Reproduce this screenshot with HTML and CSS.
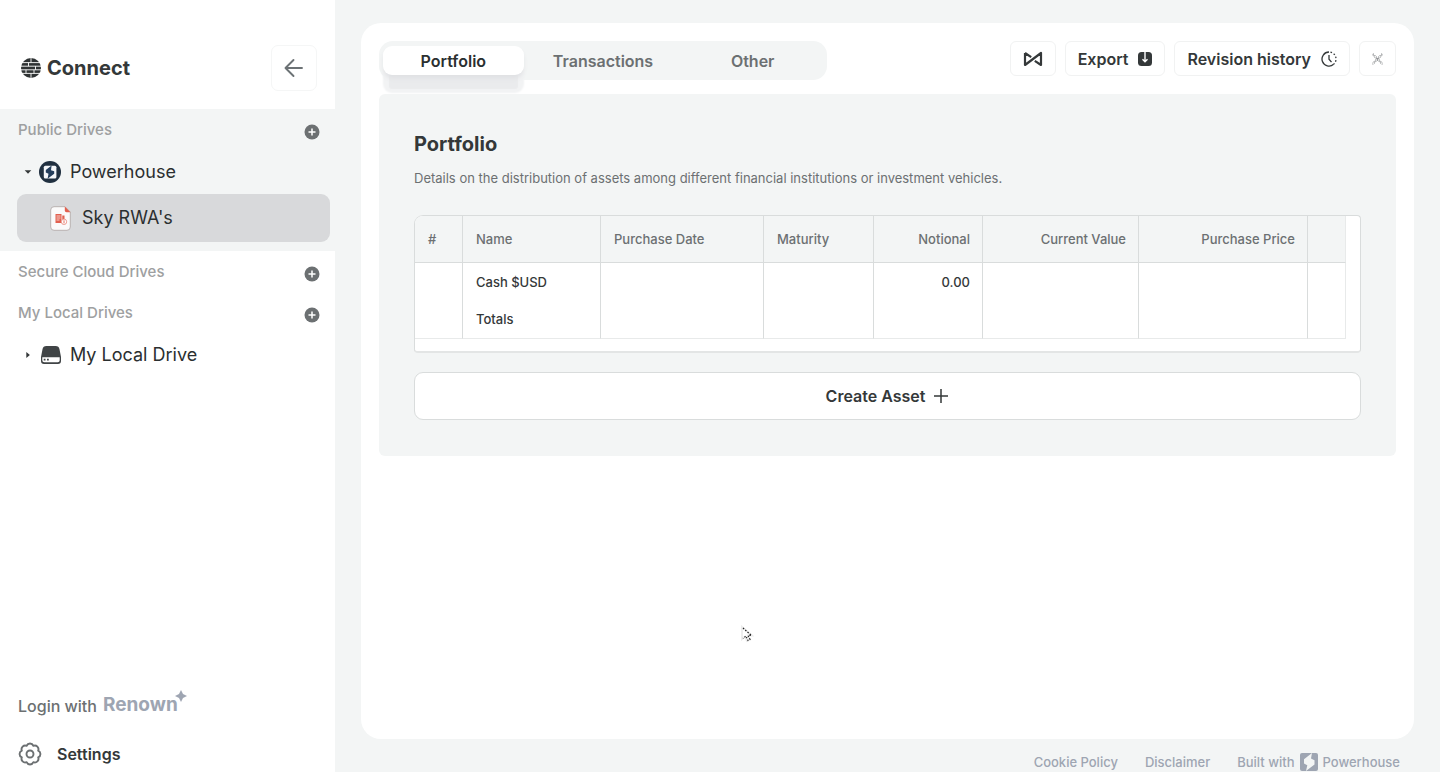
FILE: index.html
```html
<!DOCTYPE html>
<html lang="en">
<head>
<meta charset="utf-8">
<title>Connect</title>
<link rel="stylesheet" href="styles.css">
</head>
<body>
<div class="app">
  <aside class="sidebar">
    <header class="brand-bar">
      <div class="brand">
        <svg class="brand-mark" viewBox="0 0 20 20" aria-hidden="true">
          <circle cx="10" cy="10" r="10" fill="#2f3334"/>
          <path d="M1 4.600h18M0 8.200h20M0 11.800h20M1 15.400h18M10 0v4.600M7.500 4.600v3.600M14.500 8.200v3.600M5 11.800v3.600M13 11.800v3.600M10 15.400V20" stroke="#fff" stroke-width=".9" fill="none"/>
        </svg>
        <span class="brand-name">Connect</span>
      </div>
      <button class="collapse" type="button" aria-label="Collapse sidebar">
        <svg width="20" height="20" viewBox="0 0 20 20" fill="none" stroke="#6c7275" stroke-width="1.900" stroke-linecap="round" stroke-linejoin="round"><path d="M18 10H2M9.500 2 1.500 10l8 8"/></svg>
      </button>
    </header>
    <nav class="drives">
      <section class="group group-active">
        <div class="group-head">
          <h2 class="group-title">Public Drives</h2>
          <button class="add" type="button" aria-label="Add public drive"><svg width="16" height="16" viewBox="0 0 16 16"><circle cx="8" cy="8" r="7.500" fill="#6c7072"/><path d="M8 4.500v7M4.500 8h7" stroke="#fff" stroke-width="1.500"/></svg></button>
        </div>
        <a class="drive" href="#powerhouse">
          <svg class="caret" width="8" height="8" viewBox="0 0 8 8"><path d="M.7 2.200h6.600L4 5.800z" fill="#343839"/></svg>
          <svg class="drive-icon" width="22" height="22" viewBox="0 0 22 22"><circle cx="11" cy="11" r="11" fill="#203040"/><rect x="4.800" y="4.800" width="12.600" height="12.600" rx="1.500" fill="#f5f7fa"/><path d="M12.600 4.500 6.800 9v2.500l2.700 1.200L8.600 17.800l6.600-5V10.200l-3.200-1z" fill="#243e5c"/></svg>
          <span>Powerhouse</span>
        </a>
        <a class="drive file" href="#sky">
          <svg class="file-icon" width="21" height="25" viewBox="0 0 21 25"><path d="M4 .7h11l5.300 5.300v15a3.300 3.300 0 0 1-3.300 3.300H4A3.300 3.300 0 0 1 .7 21V4A3.300 3.300 0 0 1 4 .7z" fill="#fbfafa" stroke="#b9b2b1"/><path d="M14.800.5 20.500 6.200h-4a1.700 1.700 0 0 1-1.700-1.700z" fill="#e2604f"/><path d="M5.500 8h6v9h-6zM12.300 9.500h2.200V13h-2.200z" fill="#e2604f"/><path d="M6.500 10h4M6.500 12h4M6.500 14h3" stroke="#fff" stroke-width=".7"/><circle cx="14" cy="15.800" r="2.700" fill="#fff" stroke="#e88579" stroke-width=".8"/><path d="M14 14.300v3" stroke="#e2604f" stroke-width=".9"/></svg>
          <span>Sky RWA's</span>
        </a>
      </section>
      <section class="group">
        <div class="group-head">
          <h2 class="group-title">Secure Cloud Drives</h2>
          <button class="add" type="button" aria-label="Add cloud drive"><svg width="16" height="16" viewBox="0 0 16 16"><circle cx="8" cy="8" r="7.500" fill="#6c7072"/><path d="M8 4.500v7M4.500 8h7" stroke="#fff" stroke-width="1.500"/></svg></button>
        </div>
      </section>
      <section class="group">
        <div class="group-head">
          <h2 class="group-title">My Local Drives</h2>
          <button class="add" type="button" aria-label="Add local drive"><svg width="16" height="16" viewBox="0 0 16 16"><circle cx="8" cy="8" r="7.500" fill="#6c7072"/><path d="M8 4.500v7M4.500 8h7" stroke="#fff" stroke-width="1.500"/></svg></button>
        </div>
        <a class="drive" href="#local">
          <svg class="caret" width="8" height="8" viewBox="0 0 8 8"><path d="M2.300 1v6L5.900 4z" fill="#343839"/></svg>
          <svg class="drive-icon" width="22" height="22" viewBox="0 0 22 22"><path d="M7.500 2h9a4 4 0 0 1 4 3.200L22 13v4a3 3 0 0 1-3 3H5a3 3 0 0 1-3-3v-4l1.500-7.800A4 4 0 0 1 7.500 2z" fill="#404446"/><path d="M3.300 13.300h17.400v3a2 2 0 0 1-2 2H5.300a2 2 0 0 1-2-2z" fill="#fff"/><path d="M4.700 15.600h1.800M8 15.600h1.800" stroke="#404446" stroke-width="1.800"/></svg>
          <span>My Local Drive</span>
        </a>
      </section>
    </nav>
    <div class="account">
      <a class="login" href="#login"><span>Login with</span>
        <span class="renown">Renown<svg class="spark" width="12" height="12" viewBox="0 0 12 12"><path d="M6 0 8 4 12 6 8 8 6 12 4 8 0 6l4-2z" fill="#9ea5b2"/></svg></span>
      </a>
      <a class="settings" href="#settings">
        <svg width="24" height="24" viewBox="-12 -12 24 24" fill="none" stroke="#6c7072" stroke-width="1.900" stroke-linejoin="round"><circle r="3.500"/><path d="M-3.400-8.200A3.700 3.700 0 0 1 3.400-8.200 3.700 3.700 0 0 1 8.200-3.400 3.700 3.700 0 0 1 8.200 3.400 3.700 3.700 0 0 1 3.400 8.200 3.700 3.700 0 0 1-3.400 8.200 3.700 3.700 0 0 1-8.200 3.400 3.700 3.700 0 0 1-8.200-3.400 3.700 3.700 0 0 1-3.400-8.200z"/></svg>
        <span>Settings</span>
      </a>
    </div>
  </aside>

  <div class="main">
    <main class="card">
      <div class="toolbar">
        <div class="tabs" role="tablist">
          <button class="tab tab-on" type="button" role="tab" aria-selected="true">Portfolio</button>
          <button class="tab" type="button" role="tab" aria-selected="false">Transactions</button>
          <button class="tab" type="button" role="tab" aria-selected="false">Other</button>
        </div>
        <div class="actions">
          <button class="action" type="button" aria-label="Switchboard">
            <svg width="20" height="16" viewBox="0 0 20 16" fill="none" stroke="#343839" stroke-width="2.200" stroke-linejoin="round"><path d="M2 2v12L18 2v12L11.800 9.800M2 2l6.200 4.200"/></svg>
          </button>
          <button class="action" type="button">Export
            <svg width="14" height="14" viewBox="0 0 14 14"><rect width="14" height="14" rx="3.500" fill="#343839"/><path d="M7 0v9.500M4.500 7.300 7 9.800l2.500-2.500" stroke="#fff" stroke-width="1.400" fill="none"/></svg>
          </button>
          <button class="action" type="button">Revision history
            <svg width="16" height="16" viewBox="0 0 16 16" fill="none" stroke="#343839" stroke-width="1.300"><path d="M8 1a7 7 0 1 0 4.600 12.300"/><path d="M8 1a7 7 0 0 1 4.600 12.300" stroke-dasharray="1.600 1.900" stroke-dashoffset="-1.500"/><path d="M8 4v4.200l2.500 3"/></svg>
          </button>
          <button class="action" type="button" aria-label="Close">
            <svg width="11" height="12" viewBox="0 0 12 12" fill="none" stroke="#4c5052"><path d="M0 1 11 12M1 0l11 11M11 0 0 11M12 1 1 12" stroke-dasharray="1.700 .7" stroke-width=".8"/></svg>
          </button>
        </div>
      </div>
      <section class="panel">
        <h1 class="title">Portfolio</h1>
        <p class="lead">Details on the distribution of assets among different financial institutions or investment vehicles.</p>
        <div class="table-wrap">
          <table class="assets">
            <colgroup><col class="c-index"><col class="c-name"><col class="c-date"><col class="c-maturity"><col class="c-notional"><col class="c-value"><col class="c-price"><col class="c-more"></colgroup>
            <thead><tr><th>#</th><th>Name</th><th>Purchase Date</th><th>Maturity</th><th class="num">Notional</th><th class="num">Current Value</th><th class="num">Purchase Price</th><th></th></tr></thead>
            <tbody>
              <tr><td></td><td>Cash $USD</td><td></td><td></td><td class="num">0.00</td><td></td><td></td><td></td></tr>
              <tr><td></td><td>Totals</td><td></td><td></td><td></td><td></td><td></td><td></td></tr>
            </tbody>
          </table>
        </div>
        <button class="create" type="button">Create Asset
          <svg width="16" height="16" viewBox="0 0 16 16" stroke="#343839" stroke-width="1.500"><path d="M8 1v14M1 8h14"/></svg>
        </button>
      </section>
    </main>
    <footer class="footer">
      <a href="#cookies">Cookie Policy</a>
      <a href="#disclaimer">Disclaimer</a>
      <a class="built" href="#built">Built with
        <svg width="18" height="18" viewBox="0 0 18 18"><rect width="18" height="18" rx="2" fill="#9ea5b2"/><path d="M12 0 4 6.200v4.400l3.300 1.700L6 18l8.500-6.500V7.200L11 5.500z" fill="#f3f5f5"/></svg>
        Powerhouse</a>
    </footer>
  </div>
</div>
<svg class="pointer" width="14" height="20" viewBox="0 0 14 20" aria-hidden="true"><path d="M2 2v12l3-2.500 2 4.500 3-1.200-2-4.300h4z" fill="#fff" stroke="#ececec" stroke-width="2"/><path d="M3 3l8.500 7.500H8l2 4-2 1-2-4.500-3 2.500" fill="none" stroke="#222" stroke-width="1.200" stroke-dasharray="1.500 1.500"/></svg>
</body>
</html>
```
FILE: styles.css
```css
* { box-sizing: border-box; }
body {
  margin: 0;
  background: #f3f5f5;
  color: #343839;
  font-family: Inter, "Liberation Sans", sans-serif;
  font-size: 16px;
  line-height: 20px;
}
a { color: inherit; text-decoration: none; }
button { font: inherit; color: inherit; border: 0; padding: 0; background: none; cursor: pointer; }
svg { flex: none; display: block; }
h1, h2, p { margin: 0; }

.app { display: flex; min-height: 100vh; }

.sidebar { flex: 0 0 335px; display: flex; flex-direction: column; background: #fff; }
.brand-bar { display: flex; align-items: center; justify-content: space-between; padding: 45px 18px 18px 21px; }
.brand { display: flex; align-items: center; gap: 6px; }
.brand-mark { width: 20px; height: 20px; }
.brand-name { font-size: 20px; font-weight: 700; }
.collapse { display: flex; align-items: center; justify-content: center; width: 46px; height: 46px; border: 1px solid #f5f6f6; border-radius: 7px; }

.group-active { background: #f3f5f5; padding-bottom: 9px; }
.group-head { display: flex; align-items: center; justify-content: space-between; height: 41px; padding: 2px 15px 0 18px; }
.group-title { padding-bottom: 2px; font-size: 15px; font-weight: 500; color: #9ea0a1; }
.add { padding-top: 3px; }
.drive { display: flex; align-items: center; height: 44px; padding-left: 24px; font-size: 18px; color: #2b2f30; }
.drive-icon { margin: 0 9px 0 7px; }
.file { gap: 11px; height: 48px; margin: 0 5px 0 17px; padding-left: 33px; background: #d8d9db; border-radius: 9px; }

.account { margin-top: auto; padding: 0 18px 5px; font-weight: 500; }
.login { display: flex; align-items: center; gap: 6px; height: 34px; color: #6c7072; }
.renown { display: flex; padding-bottom: 2px; font-size: 19px; font-weight: 700; color: #9ea5b2; }
.spark { margin: -5px 0 0 -3px; }
.settings { display: flex; align-items: center; gap: 15px; margin-top: 18px; height: 26px; font-weight: 600; }

.main { flex: 1; min-width: 0; display: flex; flex-direction: column; padding: 23px 26px 0; }
.card { flex: 1; padding: 18px; background: #fff; border-radius: 20px; }
.toolbar { display: flex; justify-content: space-between; align-items: flex-start; margin-bottom: 14px; }
.tabs { display: flex; flex: 0 1 448px; gap: 9px; padding: 5px 4px; background: #f3f5f5; border-radius: 14px; }
.tab { flex: 1; height: 29px; border-radius: 9px; font-weight: 600; color: #6c7072; }
.tab-on { position: relative; z-index: 1; background: #fff; color: #2b2f30; box-shadow: 0 4px 5px -1px #dfe0e3, 0 20px 1px -6px #eaebed, 0 18px 2px 0 #f2f3f4; }
.actions { display: flex; gap: 9px; }
.action { display: flex; align-items: center; gap: 10px; height: 35px; padding: 0 12px; border: 1px solid #f1f2f2; border-radius: 6px; font-weight: 600; }

.panel { padding: 40px 35px 36px; background: #f3f5f5; border-radius: 6px; }
.title { font-size: 20px; font-weight: 700; }
.lead { margin-top: 14px; font-size: 13px; color: #6c7072; }
.table-wrap { margin-top: 27px; padding: 0 14px 12px 0; background: #fff; border: 1px solid #d9dcdc; border-bottom: 2px solid #e3e5e5; border-radius: 9px 4px 4px 4px; overflow: hidden; }
.assets { width: 100%; table-layout: fixed; border-collapse: separate; border-spacing: 0; font-size: 13px; font-weight: 500; }
.assets th, .assets td { text-align: left; padding: 0 13px; border-right: 1px solid #d9dcdc; }
.assets th { height: 47px; font-weight: 500; color: #6c7072; background: #f3f5f5; border-bottom: 1px solid #d9dcdc; }
.assets td { height: 37px; }
.assets tr > :last-child { border-right-color: #e8eaea; }
.assets tbody tr:last-child td { height: 39px; border-bottom: 1px solid #e8eaea; }
.assets .num { text-align: right; padding-right: 12px; }
.c-index { width: 48px; }
.c-name { width: 138px; }
.c-date { width: 163px; }
.c-maturity { width: 110px; }
.c-notional { width: 109px; }
.c-value { width: 156px; }
.c-price { width: 169px; }
.c-more { width: 38px; }
.create { display: flex; align-items: center; justify-content: center; gap: 8px; width: 100%; height: 48px; margin-top: 19px; background: #fff; border: 1px solid #d9dcdc; border-radius: 9px; font-weight: 600; }

.footer { display: flex; justify-content: flex-end; gap: 27px; padding: 13px 14px 0; font-size: 13px; font-weight: 500; color: #9ea5b2; }
.built { display: flex; align-items: center; gap: 5px; }
.pointer { position: absolute; left: 740px; top: 625px; pointer-events: none; }
```
